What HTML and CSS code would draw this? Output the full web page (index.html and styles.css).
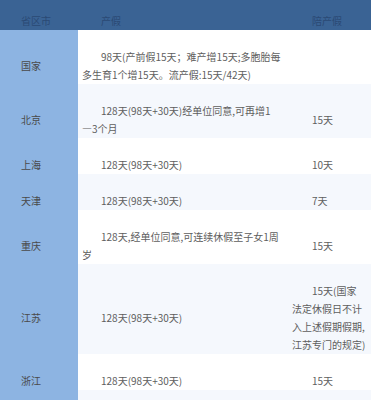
FILE: index.html
```html
<!DOCTYPE html>
<html lang="zh-CN">
<head>
<meta charset="utf-8">
<title>各地产假</title>
<link rel="stylesheet" href="styles.css">
</head>
<body>
<table class="leave">
  <colgroup><col class="c1"><col class="c2"><col class="c3"></colgroup>
  <thead>
    <tr><th>省区市</th><th>产假</th><th>陪产假</th></tr>
  </thead>
  <tbody>
    <tr><td>国家</td><td>98天(产前假15天；难产增15天;多胞胎每<br>多生育1个增15天。流产假:15天/42天)</td><td></td></tr>
    <tr><td>北京</td><td>128天(98天+30天)经单位同意,可再增1<br>—3个月</td><td>15天</td></tr>
    <tr><td>上海</td><td>128天(98天+30天)</td><td>10天</td></tr>
    <tr><td>天津</td><td>128天(98天+30天)</td><td>7天</td></tr>
    <tr><td>重庆</td><td>128天,经单位同意,可连续休假至子女1周<br>岁</td><td>15天</td></tr>
    <tr><td>江苏</td><td>128天(98天+30天)</td><td>15天(国家<br>法定休假日不计<br>入上述假期假期,<br>江苏专门的规定)</td></tr>
    <tr><td>浙江</td><td>128天(98天+30天)</td><td>15天</td></tr>
    <tr class="more"><td></td><td></td><td></td></tr>
  </tbody>
</table>
</body>
</html>
```
FILE: styles.css
```css
html, body {
  margin: 0;
  padding: 0;
  background: #ffffff;
  overflow: hidden;
}

.leave {
  border-collapse: collapse;
  table-layout: fixed;
  width: 371px;
  font-family: "Noto Sans CJK SC", "Liberation Sans", sans-serif;
  font-size: 10px;
  line-height: 18px;
  color: #5e5e5e;
}

.c1 { width: 78px; }
.c2 { width: 211px; }
.c3 { width: 82px; }

.leave th,
.leave td {
  text-align: left;
  vertical-align: middle;
  font-weight: normal;
  text-indent: 20px;
  white-space: nowrap;
}

.leave th {
  background: #3a6394;
  color: #2b4a74;
  padding: 12px 2px 0 4px;
  height: 18px;
}

.leave td {
  padding: 18px 3px 0 4px;
  background: #ffffff;
}

.leave tbody tr:nth-child(even) td {
  background: #f5f8fd;
}

.leave th:first-child,
.leave td:first-child {
  padding-left: 1px;
}

.leave tbody td:first-child,
.leave tbody tr:nth-child(even) td:first-child {
  background: #8db4e2;
  color: #4a4a4a;
}

.leave th:nth-child(2),
.leave td:nth-child(2) {
  text-indent: 19px;
}

.leave th:last-child,
.leave td:last-child {
  padding-left: 3px;
  padding-right: 2px;
}

.leave .more td {
  height: 18px;
}
```
